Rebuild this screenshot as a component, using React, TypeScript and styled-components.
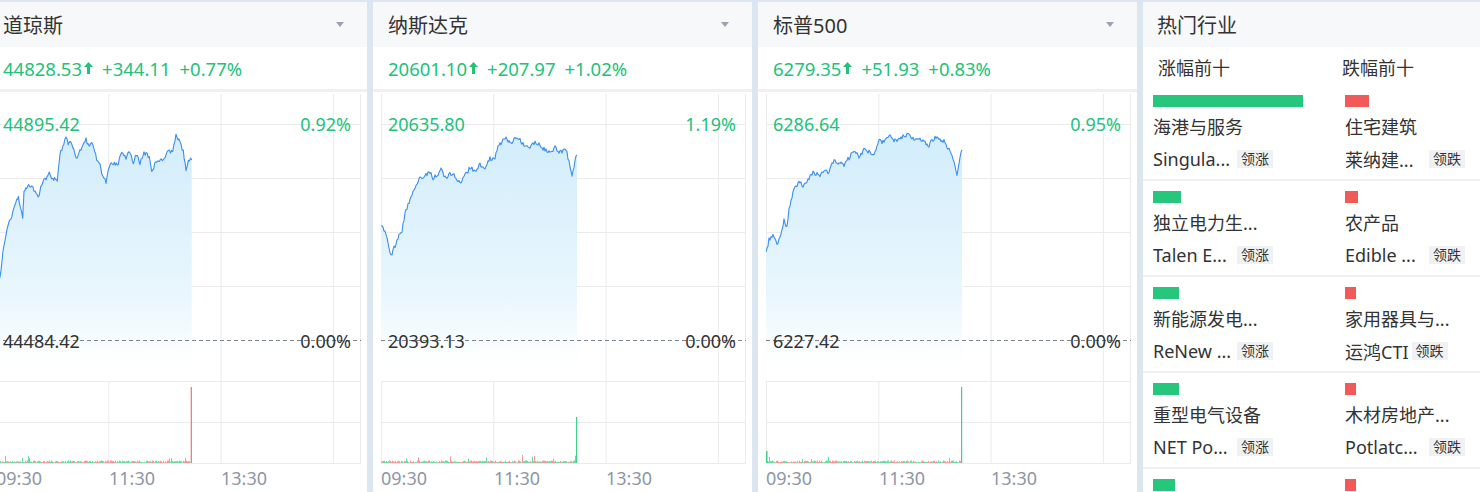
import styled, {createGlobalStyle} from "styled-components";

const GREEN = "#21c27b";

const GlobalStyle = createGlobalStyle`
    html, body {
        margin: 0;
        padding: 0;
        overflow: hidden;
        background: #dce6f1;
    }
    body {
        font-family: "Noto Sans", "Noto Sans CJK SC", sans-serif;
        color: #333;
    }
`;

const Board = styled.div`
    display: flex;
    gap: 6px;
    padding-top: 2px;
    margin-left: -12px;
    width: max-content;
    height: 490px;
`;

const Panel = styled.section<{$width: number}>`
    width: ${(p) => p.$width}px;
    flex-shrink: 0;
    background: #fff;
    display: flex;
    flex-direction: column;
    overflow: hidden;
`;

const PanelHeader = styled.header<{$pad: number}>`
    height: 45px;
    flex-shrink: 0;
    background: #f7f8fa;
    display: flex;
    align-items: center;
    justify-content: space-between;
    padding: 0 23px 0 ${(p) => p.$pad}px;
    font-size: 20px;
    color: #333;
`;

const Caret = styled.span`
    width: 0;
    height: 0;
    border-left: 4px solid transparent;
    border-right: 4px solid transparent;
    border-top: 5px solid #9ca3b0;
`;

const QuoteRow = styled.div`
    height: 42px;
    flex-shrink: 0;
    display: flex;
    align-items: center;
    gap: 9px;
    padding-left: 15px;
    font-size: 18.5px;
    color: ${GREEN};
    border-bottom: 3px solid #eef0f4;
`;

const Price = styled.span`
    display: inline-flex;
    align-items: center;
    gap: 2px;
`;

const ChartSvg = styled.svg`
    display: block;
    flex-shrink: 0;
    margin-left: 8px;
`;

/* ---------- hot sectors ---------- */

const SubHead = styled.div`
    display: grid;
    flex-shrink: 0;
    grid-template-columns: 192px 192px;
    height: 40px;
    align-items: center;
    padding-left: 10px;
    font-size: 18px;
    color: #333;
`;

const SubTitle = styled.span<{$shift: number}>`
    margin-left: ${(p) => p.$shift}px;
`;

const SectorRow = styled.div`
    display: grid;
    flex-shrink: 0;
    grid-template-columns: 192px 192px;
    padding: 8px 0 4px 10px;
    border-bottom: 2px solid #eff0f4;

    & + & {
        padding-top: 10px;
    }
`;

const SectorCell = styled.div`
    display: flex;
    flex-direction: column;
    align-items: flex-start;
`;

const Bar = styled.div<{$up: boolean}>`
    height: 12px;
    background: ${(p) => (p.$up ? "#26c67d" : "#f25a5a")};
`;

const SectorName = styled.div`
    margin-top: 4px;
    height: 32px;
    line-height: 32px;
    font-size: 18px;
    white-space: nowrap;
`;

const LeaderLine = styled.div`
    height: 32px;
    display: flex;
    align-items: center;
    font-size: 18px;
    white-space: nowrap;
`;

const LeaderName = styled.span<{$clipped: boolean}>`
    width: ${(p) => (p.$clipped ? "81px" : "auto")};
`;

const Tag = styled.span`
    margin-left: 3px;
    height: 18px;
    line-height: 18px;
    padding: 0 4px;
    font-size: 14px;
    background: #f0f1f5;
    color: #333;
`;

/* ---------- data ---------- */

type Pt = [number, number];

interface IndexInfo {
    name: string;
    price: string;
    change: string;
    pct: string;
    high: string;
    highPct: string;
    base: string;
    seed: number;
    line: Pt[];
    spikeTop: number;
    spikeUp: boolean;
    firstBar?: number;
}

const shift = (pts: Pt[], dx: number): Pt[] => pts.map(([x, y]) => [x + dx, y - 92]);

const INDEXES: IndexInfo[] = [
    {
        name: "道琼斯",
        price: "44828.53",
        change: "+344.11",
        pct: "+0.77%",
        high: "44895.42",
        highPct: "0.92%",
        base: "44484.42",
        seed: 11,
        spikeTop: 295,
        spikeUp: false,
        line: shift(
            [
                [-4, 288], [0, 276.7], [4, 245], [8.3, 223], [11.7, 216.7], [16.7, 200], [18.3, 198],
                [22.7, 216.7], [24, 190], [26.7, 188], [30.7, 185], [35, 191.7], [39.3, 196.7],
                [40.7, 185], [45, 180], [49.3, 173], [52.7, 180], [57.3, 179], [60, 155], [62.7, 146.7],
                [66, 136.7], [68.3, 143.3], [71.7, 143.3], [76, 158.3], [80, 150], [86, 140], [89.3, 146.7],
                [92.7, 143.3], [96.7, 160], [100, 161.7], [101.7, 173.3], [106, 182.7], [108.3, 167.3],
                [113.3, 162.7], [118.3, 164], [121.7, 151.7], [126, 158.3], [129.3, 151.7], [133.3, 161.7],
                [137.3, 154], [140, 164], [144, 153.3], [149.3, 156], [151.7, 170], [156.7, 161.7],
                [163.3, 160.7], [168.3, 150], [172.7, 151.7], [176, 135], [180, 143.3], [183.3, 151.7],
                [186, 170], [188.3, 159.3], [191.7, 160],
            ],
            4,
        ),
    },
    {
        name: "纳斯达克",
        price: "20601.10",
        change: "+207.97",
        pct: "+1.02%",
        high: "20635.80",
        highPct: "1.19%",
        base: "20393.13",
        seed: 23,
        spikeTop: 325,
        spikeUp: true,
        line: shift(
            [
                [381, 226], [385, 232], [389, 246], [391, 257], [394, 248], [397, 240], [402, 230],
                [405, 214], [408, 205], [410, 200], [413, 190], [417, 183], [420, 178], [425, 175],
                [430, 172], [433, 178], [437, 176], [441, 170], [445, 178], [450, 174], [455, 176],
                [460, 184], [465, 175], [470, 168], [475, 170], [480, 165], [485, 168], [490, 158],
                [494, 160], [498, 148], [505, 137], [508, 142], [512, 143], [516, 138], [520, 140],
                [525, 146], [530, 148], [535, 142], [540, 145], [545, 150], [550, 152], [555, 148],
                [560, 152], [566, 150], [570, 165], [572, 178], [575, 160], [577, 155],
            ],
            -381,
        ),
    },
    {
        name: "标普500",
        price: "6279.35",
        change: "+51.93",
        pct: "+0.83%",
        high: "6286.64",
        highPct: "0.95%",
        base: "6227.42",
        seed: 37,
        spikeTop: 295,
        spikeUp: true,
        firstBar: 12,
        line: shift(
            [
                [767, 252], [770, 240], [775, 235], [778, 244], [780, 240], [785, 220], [788, 228],
                [790, 210], [795, 188], [800, 182], [805, 186], [810, 178], [815, 172], [820, 176],
                [825, 170], [830, 172], [835, 160], [840, 163], [845, 165], [850, 158], [855, 152],
                [860, 156], [865, 150], [870, 152], [875, 155], [880, 140], [885, 143], [890, 136],
                [895, 141], [900, 140], [905, 136], [910, 133], [915, 140], [920, 138], [925, 142],
                [930, 145], [934, 140], [938, 135], [942, 142], [945, 140], [950, 150], [955, 160],
                [958, 175], [962, 152], [963, 150],
            ],
            -767,
        ),
    },
];

interface Sector {
    name: string;
    leader: string;
    width: number;
}

const RISERS: Sector[] = [
    {name: "海港与服务", leader: "Singula...", width: 150},
    {name: "独立电力生...", leader: "Talen E...", width: 28},
    {name: "新能源发电...", leader: "ReNew ...", width: 26},
    {name: "重型电气设备", leader: "NET Po...", width: 26},
    {name: "电气部件与...", leader: "Vertiv ...", width: 22},
];

const FALLERS: Sector[] = [
    {name: "住宅建筑", leader: "莱纳建...", width: 24},
    {name: "农产品", leader: "Edible ...", width: 13},
    {name: "家用器具与...", leader: "运鸿CTI", width: 11},
    {name: "木材房地产...", leader: "Potlatc...", width: 11},
    {name: "酒店及度假村", leader: "Marriott", width: 11},
];

/* ---------- chart ---------- */

const rng = (seed: number) => {
    let a = seed;
    return () => {
        a = (a + 0x6d2b79f5) | 0;
        let t = Math.imul(a ^ (a >>> 15), 1 | a);
        t = (t + Math.imul(t ^ (t >>> 7), 61 | t)) ^ t;
        return ((t ^ (t >>> 14)) >>> 0) / 4294967296;
    };
};

const jagged = (pts: Pt[], seed: number): Pt[] => {
    const rand = rng(seed);
    const out: Pt[] = [];
    for (let i = 0; i < pts.length - 1; i++) {
        const [x0, y0] = pts[i];
        const [x1, y1] = pts[i + 1];
        const steps = Math.max(1, Math.round(x1 - x0));
        for (let s = 0; s < steps; s++) {
            const t = s / steps;
            const noise = i === 0 && s === 0 ? 0 : (rand() - 0.5) * 4.5;
            out.push([x0 + (x1 - x0) * t, y0 + (y1 - y0) * t + noise]);
        }
    }
    out.push(pts[pts.length - 1]);
    return out;
};

const W = 365;
const V_LINES = [0.5, 112.8, 225.1, 337.4, 364.5];
const H_LINES = [32, 86, 140, 194, 289, 330, 371];

const UpArrow = () => (
    <svg width="9" height="12" viewBox="0 0 9 12">
        <path d="M4.5 0 L9 5 H6 V12 H3 V5 H0 Z" fill={GREEN} />
    </svg>
);

const IntradayChart = ({info}: {info: IndexInfo}) => {
    const pts = jagged(info.line, info.seed);
    const endX = pts[pts.length - 1][0];
    const startX = pts[0][0];
    const d = pts.map(([x, y], i) => `${i ? "L" : "M"}${x.toFixed(1)} ${y.toFixed(1)}`).join(" ");
    const area = `${d} L${endX} 289 L${startX} 289 Z`;
    const gradId = `fill-${info.seed}`;

    const rand = rng(info.seed * 7);
    const bars: {x: number; h: number; up: boolean}[] = [];
    for (let x = 0.5; x < endX; x += 1) {
        const big = rand() < 0.04;
        const h = big ? 3 + rand() * 5 : 0.6 + rand() * 2;
        bars.push({x, h, up: rand() < 0.5});
    }

    return (
        <ChartSvg width={W} height={400} viewBox={`0 0 ${W} 400`}>
            <defs>
                <linearGradient id={gradId} x1="0" y1="40" x2="0" y2="272" gradientUnits="userSpaceOnUse">
                    <stop offset="0" stopColor="#d2edfb" />
                    <stop offset="0.7" stopColor="#e9f6fd" />
                    <stop offset="1" stopColor="#ffffff" />
                </linearGradient>
            </defs>
            {V_LINES.map((x) => (
                <line key={x} x1={x} x2={x} y1={2} y2={371} stroke="#ebebeb" />
            ))}
            {H_LINES.map((y) => (
                <line key={y} x1={0} x2={W} y1={y + 0.5} y2={y + 0.5} stroke="#ebebeb" />
            ))}
            <path d={area} fill={`url(#${gradId})`} />
            <path d={d} fill="none" stroke="#3b8ef0" strokeWidth={1.1} strokeLinejoin="round" />
            <line x1={0} x2={W} y1={248.5} y2={248.5} stroke="#7a8294" strokeDasharray="4 3" />

            {bars.map((b) => (
                <rect
                    key={b.x}
                    x={b.x - 0.5}
                    y={371 - b.h}
                    width={1}
                    height={b.h}
                    fill={b.up ? "#6fd8a6" : "#f59a9a"}
                />
            ))}
            {info.firstBar && <rect x={0} y={371 - info.firstBar} width={1.5} height={info.firstBar} fill="#3fcf8c" />}
            <rect
                x={endX - 1}
                y={info.spikeTop}
                width={1.2}
                height={371 - info.spikeTop}
                fill={info.spikeUp ? "#3fcf8c" : "#f07272"}
            />

            <g fontFamily='"Noto Sans", sans-serif' fontSize={18} dominantBaseline="central">
                <text x={7} y={32} fill={GREEN}>{info.high}</text>
                <text x={355} y={32} fill={GREEN} textAnchor="end">{info.highPct}</text>
                <text x={7} y={248.5} fill="#333">{info.base}</text>
                <text x={355} y={248.5} fill="#333" textAnchor="end">0.00%</text>
                <g fill="#8e96a8">
                    <text x={0} y={386}>09:30</text>
                    <text x={113} y={386}>11:30</text>
                    <text x={225} y={386}>13:30</text>
                </g>
            </g>
        </ChartSvg>
    );
};

const IndexPanel = ({info}: {info: IndexInfo}) => (
    <Panel $width={379}>
        <PanelHeader $pad={15}>
            <span>{info.name}</span>
            <Caret />
        </PanelHeader>
        <QuoteRow>
            <Price>
                {info.price}
                <UpArrow />
            </Price>
            <span>{info.change}</span>
            <span>{info.pct}</span>
        </QuoteRow>
        <IntradayChart info={info} />
    </Panel>
);

const SectorColumn = ({sector, up}: {sector: Sector; up: boolean}) => (
    <SectorCell>
        <Bar $up={up} style={{width: sector.width}} />
        <SectorName>{sector.name}</SectorName>
        <LeaderLine>
            <LeaderName $clipped={sector.leader.endsWith("...")}>{sector.leader}</LeaderName>
            <Tag>{up ? "领涨" : "领跌"}</Tag>
        </LeaderLine>
    </SectorCell>
);

const HotSectors = () => (
    <Panel $width={400}>
        <PanelHeader $pad={14}>
            <span>热门行业</span>
        </PanelHeader>
        <SubHead>
            <SubTitle $shift={5}>涨幅前十</SubTitle>
            <SubTitle $shift={-3}>跌幅前十</SubTitle>
        </SubHead>
        {RISERS.map((r, i) => (
            <SectorRow key={r.name}>
                <SectorColumn sector={r} up />
                <SectorColumn sector={FALLERS[i]} up={false} />
            </SectorRow>
        ))}
    </Panel>
);

export default function App() {
    return (
        <>
            <GlobalStyle />
            <Board>
                {INDEXES.map((info) => (
                    <IndexPanel key={info.name} info={info} />
                ))}
                <HotSectors />
            </Board>
        </>
    );
}
